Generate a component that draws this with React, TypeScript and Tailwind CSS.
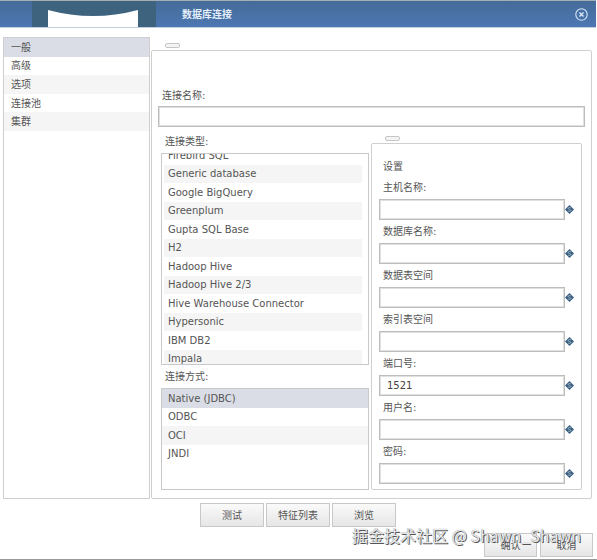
import React from "react";

const categories = ["一般", "高级", "选项", "连接池", "集群"];

const databases = [
  "Firebird SQL",
  "Generic database",
  "Google BigQuery",
  "Greenplum",
  "Gupta SQL Base",
  "H2",
  "Hadoop Hive",
  "Hadoop Hive 2/3",
  "Hive Warehouse Connector",
  "Hypersonic",
  "IBM DB2",
  "Impala",
];

const methods = ["Native (JDBC)", "ODBC", "OCI", "JNDI"];

const settings = [
  { id: "host", label: "主机名称:", value: "" },
  { id: "database", label: "数据库名称:", value: "" },
  { id: "data-space", label: "数据表空间", value: "" },
  { id: "index-space", label: "索引表空间", value: "" },
  { id: "port", label: "端口号:", value: "1521" },
  { id: "user", label: "用户名:", value: "" },
  { id: "password", label: "密码:", value: "" },
];

function VariableIcon() {
  return (
    <svg viewBox="0 0 9 9" className="size-[9px] shrink-0" aria-hidden="true">
      <path d="M4.5 0 9 4.5 4.5 9 0 4.5Z" fill="#3b5f82" />
      <path
        d="M5.9 3C5.3 2.3 3.2 2.4 3.2 3.4c0 1.2 2.7 1 2.7 2.1 0 1-2.1 1.1-2.8.4"
        fill="none"
        stroke="#b9d8d8"
        strokeWidth=".7"
      />
    </svg>
  );
}

function Stub() {
  return <div className="h-[5px] w-[15px] rounded-xs border border-[#c6c6c6] bg-[#f4f4f4]" />;
}

function PushButton({ children, className }: { children: React.ReactNode; className: string }) {
  return (
    <button
      type="button"
      className={`h-6 border border-[#c8c8c8] bg-linear-to-b from-[#fafafa] to-[#e6e6e6] pt-px text-center leading-5 ${className}`}
    >
      {children}
    </button>
  );
}

const inputStyle =
  "h-[21px] min-w-0 flex-1 border border-[#bdbdbd] bg-white px-[7px] text-[10px] text-[#444] outline-none shadow-[inset_0_0_0_1px_#e0e0e0]";

export default function App() {
  return (
    <div className="relative flex flex-col border-b border-[#999] bg-white pr-px font-['DejaVu_Sans','Noto_Sans_CJK_SC',sans-serif] text-[10px] leading-4 text-[#555]">
      <header className="flex h-7 items-stretch border-t border-b border-t-[#a3adb2] border-b-[#c3d0dc] bg-linear-to-b from-[#446b98] to-[#4d77b3] pr-2 pl-8">
        <svg viewBox="0 0 124 26" className="h-[26px] w-[124px]" aria-hidden="true">
          <path d="M0 0H124V26H0Z" fill="#3d637f" />
          <path d="M16 9Q61 21 106 9V26H16Z" fill="#fff" />
        </svg>
        <h1 className="flex-1 self-center pt-[2px] pl-[26px] font-bold text-[#e4eefa]">数据库连接</h1>
        <button type="button" aria-label="关闭" className="self-center">
          <svg viewBox="0 0 13 13" className="size-[13px]" fill="none" stroke="#d5e6f7">
            <circle cx="6.5" cy="6.5" r="5.7" strokeWidth="1.1" />
            <path d="m4.5 4.5 4 4m0-4-4 4" strokeWidth="1.5" />
          </svg>
        </button>
      </header>

      <div className="flex gap-px pt-[9px] pr-1 pl-[3px]">
        <nav className="w-[147px] border border-[#cfcfcf]">
          <ul className="flex h-[93px] flex-col">
            {categories.map((name, i) => (
              <li
                key={name}
                className={`flex flex-1 items-center pt-px ${i === 0 ? "bg-[#dadde5]" : i % 2 === 0 ? "bg-[#f5f5f5]" : ""}`}
              >
                <a href="#" className="pl-[7px]">
                  {name}
                </a>
              </li>
            ))}
          </ul>
        </nav>

        <main className="min-w-0 flex-1 pt-[6px]">
          <div className="pl-[14px]">
            <Stub />
          </div>
          <div className="mt-[2px] rounded-xs border border-[#cfcfcf] px-[6px] pt-[37px] pb-2">
            <label htmlFor="name" className="block pl-1">
              连接名称:
            </label>
            <div className="mt-[2px] flex">
              <input id="name" className={inputStyle} />
            </div>

            <div className="flex gap-[2px] px-[3px] pt-[7px]">
              <section className="flex min-w-0 flex-[208] flex-col">
                <h2 className="pl-1">连接类型:</h2>
                <div className="mt-[3px] h-[212px] overflow-hidden border border-[#c9c9c9] pr-[6px] pl-[2px]">
                  <ul className="-mt-2 flex h-[222px] flex-col">
                    {databases.map((name, i) => (
                      <li
                        key={name}
                        className={`flex flex-1 items-center pl-1 pt-px ${i % 2 === 1 ? "bg-[#f5f5f5]" : ""}`}
                      >
                        {name}
                      </li>
                    ))}
                  </ul>
                </div>
                <h2 className="mt-1 pl-1">连接方式:</h2>
                <div className="mt-[3px] h-[102px] border border-[#c9c9c9]">
                  <ul className="flex h-[74px] flex-col">
                    {methods.map((name, i) => (
                      <li
                        key={name}
                        className={`flex flex-1 items-center pl-[6px] pt-px ${i === 0 ? "bg-[#dadde5]" : i % 2 === 0 ? "bg-[#f5f5f5]" : ""}`}
                      >
                        {name}
                      </li>
                    ))}
                  </ul>
                </div>
              </section>

              <section className="min-w-0 flex-[211] pt-[2px]">
                <div className="pl-[14px]">
                  <Stub />
                </div>
                <div className="mt-[2px] rounded-xs border border-[#cfcfcf] px-[7px] pt-[15px] pb-[5px]">
                  <h2 className="mb-[5px] pl-1">设置</h2>
                  <div className="flex flex-col gap-1">
                    {settings.map((field) => (
                      <div key={field.id}>
                        <label htmlFor={field.id} className="block pl-1">
                          {field.label}
                        </label>
                        <div className="mt-[3px] flex items-center">
                          <input id={field.id} defaultValue={field.value} className={inputStyle} />
                          <VariableIcon />
                        </div>
                      </div>
                    ))}
                  </div>
                </div>
              </section>
            </div>
          </div>
        </main>
      </div>

      <div className="flex justify-center gap-[2px] pt-1">
        <PushButton className="w-16">测试</PushButton>
        <PushButton className="w-16">特征列表</PushButton>
        <PushButton className="w-16">浏览</PushButton>
      </div>
      <footer className="flex justify-end gap-[3px] pt-[6px] pr-[3px] pb-[2px]">
        <PushButton className="w-[53px]">确认</PushButton>
        <PushButton className="w-[53px]">取消</PushButton>
      </footer>

      <p className="pointer-events-none absolute right-4 bottom-3 font-['Noto_Sans_CJK_SC',sans-serif] text-base leading-6 whitespace-nowrap text-[#e8e8e8] [text-shadow:1px_1px_0_#555,0_0_1px_#777]">
        掘金技术社区 @ Shawn_Shawn
      </p>
    </div>
  );
}
